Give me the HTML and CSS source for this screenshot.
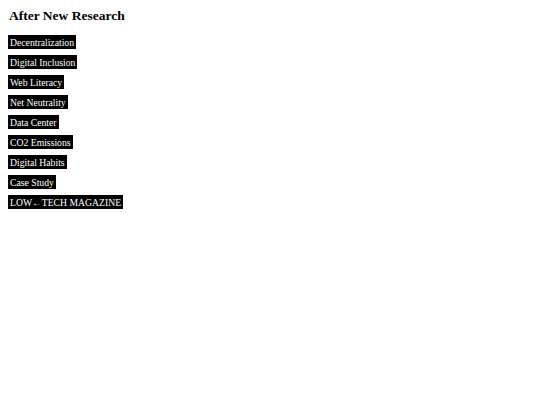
FILE: index.html
```html
<!DOCTYPE html>
<html lang="en">
<head>
    <meta charset="UTF-8">
    <title>After New Research</title>
    <link rel="stylesheet" href="styles.css">
</head>
<body>
    <h3 class="title">After New Research</h3>
    <ul class="tags">
        <li><a class="tag" href="#">Decentralization</a></li>
        <li><a class="tag" href="#">Digital Inclusion</a></li>
        <li><a class="tag" href="#">Web Literacy</a></li>
        <li><a class="tag" href="#">Net Neutrality</a></li>
        <li><a class="tag" href="#">Data Center</a></li>
        <li><a class="tag" href="#">CO2 Emissions</a></li>
        <li><a class="tag" href="#">Digital Habits</a></li>
        <li><a class="tag" href="#">Case Study</a></li>
        <li><a class="tag" href="#">LOW&larr;TECH MAGAZINE</a></li>
    </ul>
</body>
</html>
```

FILE: styles.css
```css
body {
    font-family: "Liberation Serif", serif;
    margin: 8px;
    background: #fff;
    color: #000;
}

.title {
    font-size: 13.5px;
    margin: 0 0 8px 1px;
}

.tags {
    list-style: none;
    margin: 0;
    padding: 0;
    font-size: 9.7px;
}

.tags li {
    line-height: 20px;
}

.tag {
    background: #000;
    color: #fff;
    padding: 1.5px 2px;
    text-decoration: none;
}
```
